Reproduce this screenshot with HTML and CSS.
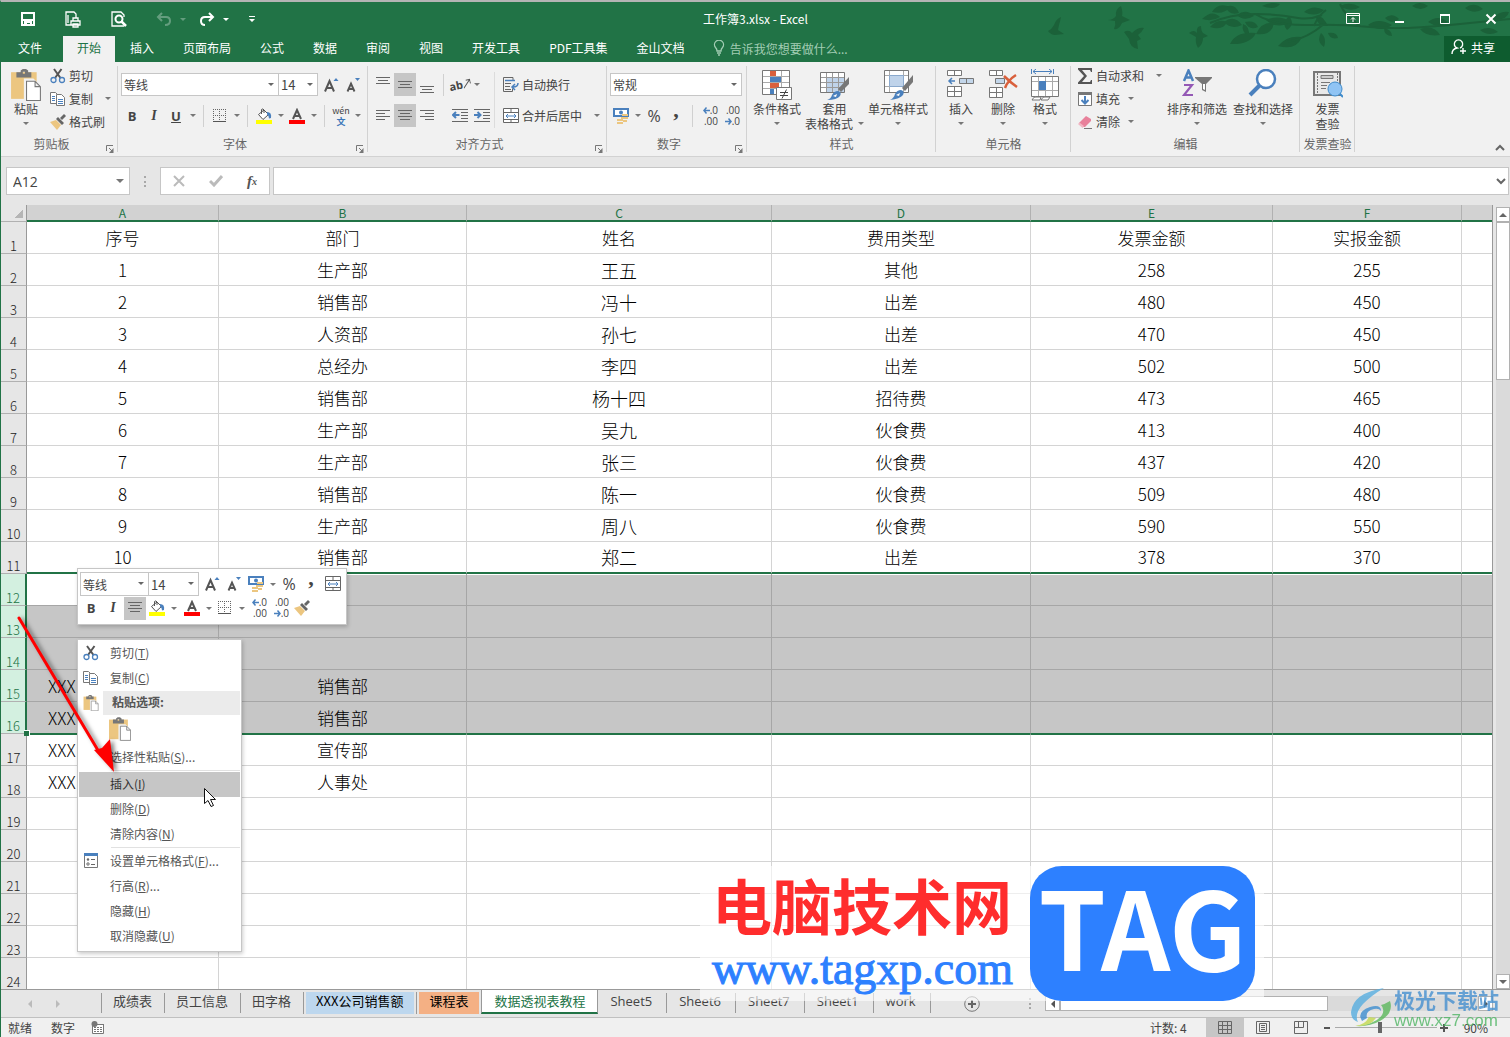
FILE: index.html
```html
<!DOCTYPE html>
<html lang="zh-CN">
<head>
    <meta charset="UTF-8">
    <meta name="viewport" content="width=device-width, initial-scale=1.0">
    <title>工作簿3.xlsx - Excel</title>
    <link rel="stylesheet" href="styles.css">
</head>
<body>
<!-- Icon set -->
<svg class="defs" aria-hidden="true">
    <symbol id="paste" viewBox="0 0 28 30">
        <path fill="#ecc680" d="M0 3h24v25H0z"/>
        <path fill="#777" d="M5 8V3h4V1.500l2-1.500h3l2 1.500V3h3v5zM11 2.500v2h2v-2z" fill-rule="evenodd"/>
        <path fill="#f1f1f1" d="M12 9h9l7 7v14H12z"/>
        <path fill="#fff" stroke="#777" d="M14.500 11.500h8l5 5v13h-13zM22.500 11.500v5h5"/>
    </symbol>
    <symbol id="cut" viewBox="0 0 16 16">
        <path stroke="#555" stroke-width="2" fill="none" d="M4 1l6.500 9M11.500 1L5 10"/>
        <circle cx="3.500" cy="12" r="2.500" fill="none" stroke="#4a80bd" stroke-width="1.300"/>
        <circle cx="12" cy="12" r="2.500" fill="none" stroke="#4a80bd" stroke-width="1.300"/>
    </symbol>
    <symbol id="copy" viewBox="0 0 16 16">
        <path fill="#fff" stroke="#777" d="M.5 1.500h5l3 3v8h-8z"/>
        <path stroke="#4a80bd" d="M2 5.500h3M2 7.500h3M2 9.500h3"/>
        <path fill="#fff" stroke="#777" d="M6.500 3.500h5l3 3v8h-8z"/>
        <path stroke="#4a80bd" d="M8 8.500h5M8 10.500h5M8 12.500h5"/>
    </symbol>
    <symbol id="brush" viewBox="0 0 16 16">
        <path fill="#ecc680" d="M0 8l6-2 5 5-4 5z"/>
        <path fill="#666" d="M6 5l2-2 6 6-2 2zM10 4l4-4 2 2-4 4z"/>
    </symbol>
    <symbol id="grow" viewBox="0 0 16 16">
        <path fill="none" stroke="#555" stroke-width="2" d="M2 14.500L6.500 4l4.500 10.500M3.500 11h6"/>
        <path fill="#4a80bd" d="M10.500 4L13 1l2.500 3z"/>
    </symbol>
    <symbol id="shrink" viewBox="0 0 16 16">
        <path fill="none" stroke="#555" stroke-width="1.900" d="M2.500 14.500L6 6.500l3.500 8M3.500 12h5"/>
        <path fill="#4a80bd" d="M10 1h5l-2.500 3z"/>
    </symbol>
    <symbol id="borders" viewBox="0 0 16 16">
        <path stroke="#666" stroke-dasharray="1 1" fill="none" d="M1 1.500h13M1 7.500h13M1.500 1v13M7.500 1v13M13.500 1v13"/>
        <path stroke="#555" d="M1 13.500h13"/>
    </symbol>
    <symbol id="bucket" viewBox="0 0 16 16">
        <path fill="#fff" stroke="#555" d="M2.500 6.500L8 2l4.500 4.500L7 11.500z"/>
        <path fill="none" stroke="#555" d="M5.500 6V1.500q1.500-1.500 2.500.5v3"/>
        <path fill="#4a80bd" d="M11 4q5 0 4 6l-2 .5q0-3-2-4z"/>
        <path fill="#ff0" d="M0 12h16v4H0z"/>
    </symbol>
    <symbol id="color" viewBox="0 0 16 16">
        <path fill="none" stroke="#555" stroke-width="2" d="M4 11L8 2l4 9M5.500 8h5"/>
        <path fill="#f00" d="M0 12h16v4H0z"/>
    </symbol>
    <symbol id="a-top" viewBox="0 0 16 16"><path stroke="#666" d="M1 .5h14M3 3.500h10M1 6.500h14"/></symbol>
    <symbol id="a-mid" viewBox="0 0 16 16"><path stroke="#666" d="M1 4.500h14M3 7.500h10M1 10.500h14"/></symbol>
    <symbol id="a-bot" viewBox="0 0 16 16"><path stroke="#666" d="M1 9.500h14M3 12.500h10M1 15.500h14"/></symbol>
    <symbol id="a-left" viewBox="0 0 16 16"><path stroke="#666" d="M1 2.500h14M1 5.500h9M1 8.500h14M1 11.500h9"/></symbol>
    <symbol id="a-center" viewBox="0 0 16 16"><path stroke="#666" d="M1 2.500h14M3 5.500h10M1 8.500h14M3 11.500h10"/></symbol>
    <symbol id="a-right" viewBox="0 0 16 16"><path stroke="#666" d="M1 2.500h14M6 5.500h9M1 8.500h14M6 11.500h9"/></symbol>
    <symbol id="outdent" viewBox="0 0 16 16">
        <path stroke="#666" d="M0 1.500h16M9 4.500h7M9 7.500h7M9 10.500h7M0 13.500h16"/>
        <path stroke="#4a80bd" stroke-width="2" fill="none" d="M7.500 7H1.500M4 4L1 7l3 3"/>
    </symbol>
    <symbol id="indent" viewBox="0 0 16 16">
        <path stroke="#666" d="M0 1.500h16M9 4.500h7M9 7.500h7M9 10.500h7M0 13.500h16"/>
        <path stroke="#4a80bd" stroke-width="2" fill="none" d="M0 7h6M3.500 4l3 3-3 3"/>
    </symbol>
    <symbol id="wrap" viewBox="0 0 16 16">
        <path fill="none" stroke="#666" d="M10 3.500V.5H.5v14h9v-3M2 6.500h6M2 9.500h5M2 12.500h6"/>
        <path fill="none" stroke="#4a80bd" stroke-width="1.500" d="M2 3.500h10M15 6q0 4-5 4M12 7l-3 3 3 3"/>
    </symbol>
    <symbol id="merge" viewBox="0 0 16 16">
        <path fill="#fff" stroke="#666" d="M.5.5h15v14H.5zM.5 4.500h15M.5 11.500h15M8 .5v4M8 11.500v3"/>
        <path fill="none" stroke="#4a80bd" d="M3 8h10M5 6L3 8l2 2M11 6l2 2-2 2"/>
    </symbol>
    <symbol id="money" viewBox="0 0 16 16">
        <path fill="#fff" stroke="#4a80bd" stroke-width="2" d="M1 1h14v7H1z"/>
        <circle cx="8" cy="4.500" r="2" fill="#4a80bd"/>
        <path fill="#ecc680" d="M9 6h6v2H9zM8 9h7v2H8zM4 11h6v2H4zM4 14h6v2H4zM10 12h4v2h-4z"/>
    </symbol>
    <symbol id="larr" viewBox="0 0 6 6"><path fill="none" stroke="#4a80bd" stroke-width="1.300" d="M6 3H1M3 .5L.8 3 3 5.500"/></symbol>
    <symbol id="rarr" viewBox="0 0 6 6"><path fill="none" stroke="#4a80bd" stroke-width="1.300" d="M0 3h5M3 .5L5.200 3 3 5.500"/></symbol>
    <symbol id="cond" viewBox="0 0 30 32">
        <path fill="#fff" stroke="#777" d="M.5 1.500h27v24H.5z"/>
        <path stroke="#aaa" d="M8.500 2v23M19.500 2v23M1 7.500h26M1 13.500h26M1 19.500h26"/>
        <path fill="#d9603c" d="M8 2h6v5H8zM8 14h9v5H8z"/>
        <path fill="#4a80bd" d="M8 8h11v5H8zM8 20h4v5H8z"/>
        <path fill="#fff" stroke="#777" d="M14.500 18.500h15v12h-15z"/>
        <path stroke="#444" d="M18 23.500h8M18 26.500h8M24.500 20.500l-4.500 9"/>
    </symbol>
    <symbol id="tblfmt" viewBox="0 0 30 32">
        <path fill="#fff" stroke="#777" d="M.5 3.500h24v20H.5z"/>
        <path fill="#bfd3ea" d="M7 9h17v14H7z"/>
        <path stroke="#999" d="M6.500 4v19M12.500 4v19M18.500 4v19M1 8.500h23M1 13.500h23M1 18.500h23"/>
        <path fill="#777" d="M29 8v7l-8 8-3-3z"/>
        <path fill="#4a80bd" d="M18 22q4 1 2 5-3 4-13 4 4-1 5-5 2-4 6-4z"/><path fill="#fff" d="M13 27l4-2-1 3z"/>
    </symbol>
    <symbol id="cellstyle" viewBox="0 0 30 32">
        <path fill="#fff" stroke="#777" d="M1.500 1.500h24v22h-24z"/>
        <path stroke="#aaa" d="M6.500 2v21M20.500 2v21M2 6.500h23M2 17.500h23"/>
        <path fill="#bfd3ea" stroke="#8aa9cd" d="M6.500 6.500h14v11h-14z"/>
        <path fill="#777" d="M30 6v7l-8 9-3-3z"/>
        <path fill="#4a80bd" d="M18 21q4 1 2 5-3 4-13 5 4-2 5-6 2-4 6-4z"/><path fill="#fff" d="M13 26l4-2-1 3z"/>
    </symbol>
    <symbol id="ins" viewBox="0 0 28 32">
        <path fill="#fff" stroke="#777" d="M.5 1.500h14v5H.5zM7.500 1.500v5M.5 17.500h14v10H.5zM7.500 17.500v10M.5 22.500h14"/>
        <path fill="#c3d6ea" stroke="#777" d="M12.500 9.500h14v5h-14zM19.500 9.500v5"/>
        <path stroke="#4a80bd" stroke-width="1.500" fill="none" d="M8 12H2M5 9l-3 3 3 3"/>
    </symbol>
    <symbol id="del" viewBox="0 0 28 32">
        <path fill="#fff" stroke="#777" d="M.5 1.500h13v5H.5zM7.500 1.500v5M.5 18.500h13v10H.5zM7.500 18.500v10M.5 23.500h13"/>
        <path fill="#c3d6ea" stroke="#777" d="M6.500 9.500h9v5h-9z"/>
        <path stroke="#d9603c" stroke-width="2.500" fill="none" d="M15 7q7 7 13 11M27 6q-8 5-11 13"/>
    </symbol>
    <symbol id="fmt" viewBox="0 0 28 32">
        <path stroke="#4a80bd" fill="none" d="M.5 0v5M22.500 0v5M2 2.500h19M5 0L2 2.500 5 5M18 0l3 2.500L18 5"/>
        <path fill="#fff" stroke="#777" d="M.5 7.500h27v20H.5z"/>
        <path stroke="#aaa" d="M7.500 8v19M14.500 8v19M21.500 8v19M1 12.500h26M1 21.500h26"/>
        <path fill="#4a80bd" d="M8 12h7v9H8z"/>
        <path fill="#fff" stroke="#777" d="M1 31q2-4 4-3h5l-1 3zM10 31q2-4 4-3h5l-2 3z"/>
    </symbol>
    <symbol id="sum" viewBox="0 0 16 16"><path fill="#555" d="M1 0h14v4h-1l-1-2H5l5 6-5 6h8l1-2h1v4H1v-1.500L7 8 1 1.500z"/></symbol>
    <symbol id="fill" viewBox="0 0 16 16">
        <path fill="#fff" stroke="#777" d="M1.500 1.500h13v13h-13z"/><path fill="#777" d="M1 1h14v3H1z"/>
        <path stroke="#4a80bd" stroke-width="2" fill="none" d="M8 5v7M4.500 9L8 12.500 11.500 9"/>
    </symbol>
    <symbol id="eraser" viewBox="0 0 16 16">
        <path fill="#e8819b" d="M9 2l5 3v2l-6 6H6L2 9z"/><path fill="#f1b5c2" d="M1 10l1.500-1.500L7 12l-1.500 2z"/><path stroke="#777" d="M7 14.500h8"/>
    </symbol>
    <symbol id="sort" viewBox="0 0 30 32">
        <path stroke="#4a80bd" stroke-width="2.500" fill="none" d="M2 12L6.500 1.500 11 12M3.500 8.500h6"/>
        <path stroke="#9459b5" stroke-width="2.200" fill="none" d="M2 16h8L2 26h9"/>
        <path fill="#777" d="M13 8h17v1l-6 6v8l-4-2v-6l-7-6z"/><path fill="#fff" d="M21 15h2v6l-2-1z"/>
    </symbol>
    <symbol id="find" viewBox="0 0 30 32">
        <path stroke="#4a80bd" stroke-width="4" d="M2 26l11-11"/>
        <circle cx="18" cy="10" r="9" fill="#fff" stroke="#4a80bd" stroke-width="2.500"/>
    </symbol>
    <symbol id="invoice" viewBox="0 0 30 32">
        <path fill="#e9e9e9" stroke="#777" stroke-width="2" d="M1 3h26v23H1z"/>
        <path stroke="#777" stroke-dasharray="2 1" d="M4.500 4v21M24.500 4v21"/>
        <path fill="#ccc" stroke="#777" d="M8 6.500h12v3H8zM8 13.500h9M8 16.500h6M8 19.500h5"/>
        <path stroke="#3f8ccc" stroke-width="2" d="M26 24l4 4"/>
        <circle cx="22" cy="20" r="7" fill="#90c4f4" stroke="#3f8ccc"/>
    </symbol>
    <symbol id="launch" viewBox="0 0 8 8"><path fill="none" stroke="#777" d="M.5 6V.5H7M3 3l3 3"/><path fill="#777" d="M7.500 3v5H3z"/></symbol>
    <symbol id="swirl" viewBox="0 0 44 42">
        <path fill="#58aee0" d="M34 1Q3 6 1 25q0 8 7 10-4-8 5-18Q22 8 34 1z"/>
        <path fill="#3e8ed0" d="M12 34q-6-9 8-14 11-3 11 4-2-3-7-2-9 2-7 9z"/>
        <path fill="#5cb85c" d="M40 14q4 12-10 20Q19 40 6 39q20-2 26-11 3-6-1-10 4-1 9-4z"/>
        <path fill="#c3d94e" d="M5 39q10-1 14-9l7 1q-6 9-21 8z"/>
    </symbol>
</svg>

<div class="app">
    <header class="top">
        <!-- Leaf and bird decoration behind the window buttons -->
        <svg class="foliage" viewBox="0 0 470 60" width="470" height="60" aria-hidden="true">
            <g fill="#1b6139">
                <path d="M8 29q4-2 6-6 2-6 7-8-1 5-2 8l-1 5 6 4-9 1q-4 0-7-4z"/>
                <path d="M68 18q5 0 8-4-1-7 5-10 2 6 1 10l8 4-8 3q-3 7-8 6 2-4 1-8z"/>
                <path d="M84 30q5-3 8 1 6-6 12-5-2 4-6 7l3 4-4 2 1 8q-8-1-9-10z"/>
                <path d="M149 31q5-4 8 0-1-7 4-7 0 5 2 7l5 3-5 2q0 6-5 10-3-5-2-11z"/>
                <path d="M162 17q10-10 18-2-8 5-18 2zM172 10q6-10 18-5-6 8-18 5zM170 25q8-9 17-5-4 9-17 5zM184 20q10-8 18 3-11 5-18-3zM186 5q9-4 13 6-10 3-13-6zM197 13q9-7 17 1-10 6-17-1zM203 22q7 2 6 13-8-5-6-13zM205 20q10-2 13 5-9 4-13-5z"/>
                <path d="M190 42q6-13 26-11-6 12-26 11zM216 32q6-13 18-11-2 13-18 11zM222 4q8-5 18-2-5 7-18 2zM226 18q13-6 26 2-16 8-26-2zM238 44q9-11 24-9-6 14-24 9zM247 28q-6-6 2-14 7 8-2 14zM264 10q9-8 20-2-8 8-20 2zM276 14q6-2 12 10-12 0-12-10zM281 31q6 5 3 14-8-5-3-14zM288 31q9-1 10 5-8 2-10-5z"/>
                <path d="M300 4q10-5 20 1-9 6-20-1zM328 23q10-8 24 0-10 8-24 0zM345 16q7-6 14 1-7 6-14-1zM372 4q8-6 16 0-7 6-16 0zM388 20q10-8 20 0-10 7-20 0zM344 26q8 2 8 8-8 0-8-8zM380 27q14-5 20 6-14 2-20-6zM425 6q9-7 18 1-9 6-18-1zM452 17q8-9 17-7-2 9-17 7zM440 28q10-5 18 2-10 5-18-2z"/>
            </g>
            <path fill="none" stroke="#1b6139" stroke-width="2" d="M170 21q20-9 46-9 20 0 42 4 12 2 24-3M215 12q20 12 55 11 30-1 60 2t80-2 60-6M274 24q4-10 12-16M300 2q5 12 20 22M248 40q20-4 36-18"/>
        </svg>
        <div class="titlebar">
            <div class="qat">
                <button aria-label="保存"><svg width="16" height="16"><path fill="none" stroke="#fff" stroke-width="2" d="M2 2h12v12H2zM3 9h10"/><path fill="#fff" d="M4 9h8v5h-2v-2H7v2H4z"/></svg></button>
                <button aria-label="快速打印"><svg width="18" height="18"><path fill="none" stroke="#fff" stroke-width="1.300" d="M7 15H2V2h8l2 2v4M4 5v8M7 11h9v4H7zM9 11V8h5v3M9 14h5v3H9z"/></svg></button>
                <button aria-label="打印预览"><svg width="18" height="18"><path fill="none" stroke="#fff" stroke-width="1.300" d="M14 7V5l-3-3H2v14h12"/><circle cx="9" cy="9" r="3.500" fill="none" stroke="#fff" stroke-width="2"/><path stroke="#fff" stroke-width="2.500" d="M11 11l5 5"/></svg></button>
                <button class="faded" aria-label="撤消"><svg width="16" height="16"><path fill="none" stroke="#fff" stroke-width="2" d="M2 6h8q4 0 4 4t-5 4M6 2L2 6l4 4"/></svg><i class="caret"></i></button>
                <button aria-label="恢复"><svg width="16" height="16"><path fill="none" stroke="#fff" stroke-width="2" d="M14 6H6q-4 0-4 4t4 4M10 2l4 4-4 4"/></svg><i class="caret"></i></button>
                <button aria-label="自定义快速访问工具栏"><svg width="8" height="8"><path fill="#fff" d="M1 1h6v1H1zM1 4h6L4 7z"/></svg></button>
            </div>
            <div class="doc-title">工作簿3.xlsx - Excel</div>
            <div class="window-buttons">
                <button aria-label="功能区显示选项"><svg width="14" height="12"><path fill="none" stroke="#fff" d="M.5.5h13v10H.5zM1 2.500h12M7 9V5M5 6.500l2-2 2 2"/></svg></button>
                <button aria-label="最小化"><svg width="14" height="12"><path fill="#fff" d="M3 8h9v2H3z"/></svg></button>
                <button aria-label="最大化"><svg width="12" height="12"><path fill="none" stroke="#fff" d="M1.500 1.500h9v9h-9z"/><path fill="#fff" d="M1 1h10v2H1z"/></svg></button>
                <button aria-label="关闭"><svg width="12" height="12"><path stroke="#fff" stroke-width="2" d="M1.500 1.500l9 9M10.500 1.500l-9 9"/></svg></button>
            </div>
        </div>
        <nav class="ribbon-tabs">
            <button class="file">文件</button>
            <button class="active">开始</button>
            <button>插入</button>
            <button>页面布局</button>
            <button>公式</button>
            <button>数据</button>
            <button>审阅</button>
            <button>视图</button>
            <button>开发工具</button>
            <button>PDF工具集</button>
            <button>金山文档</button>
            <label class="tell-me">
                <svg width="12" height="16"><path fill="none" stroke="#a3cdb4" stroke-width="1.300" d="M4 11q0-2-1.500-3.500a4.500 4.500 0 1 1 7 0Q8 9 8 11zM4 13h4M5 15h2"/></svg>
                <input type="text" placeholder="告诉我您想要做什么..." aria-label="告诉我您想要做什么">
            </label>
            <button class="share">
                <svg width="16" height="18"><path fill="none" stroke="#fff" stroke-width="1.400" d="M1 16q0-5 5-6a4.200 4.200 0 1 1 3 0M9 13h6M12 10v6"/></svg>共享
            </button>
        </nav>
    </header>

    <section class="ribbon">
        <div class="group clipboard">
            <div class="tools">
                <button class="big"><svg><use href="#paste"/></svg><span>粘贴</span><span><i class="caret"></i></span></button>
                <div class="stack">
                    <button><svg><use href="#cut"/></svg>剪切</button>
                    <button><svg><use href="#copy"/></svg>复制<i class="caret far"></i></button>
                    <button><svg><use href="#brush"/></svg>格式刷</button>
                </div>
            </div>
            <div class="name">剪贴板<button class="launcher" aria-label="剪贴板设置"><svg><use href="#launch"/></svg></button></div>
        </div>
        <div class="group font">
            <div class="tools rows">
                <div class="row">
                    <span class="combo grow"><select aria-label="字体"><option>等线</option></select></span>
                    <span class="combo size"><select aria-label="字号"><option>14</option></select></span>
                    <button class="btn first" aria-label="增大字号"><svg><use href="#grow"/></svg></button>
                    <button class="btn" aria-label="减小字号"><svg><use href="#shrink"/></svg></button>
                </div>
                <div class="row">
                    <button class="btn b">B</button>
                    <button class="btn it">I</button>
                    <button class="btn un">U</button>
                    <button class="drop" aria-label="下划线选项"><i class="caret"></i></button>
                    <i class="sep"></i>
                    <button class="btn" aria-label="边框"><svg><use href="#borders"/></svg></button>
                    <button class="drop" aria-label="边框选项"><i class="caret"></i></button>
                    <i class="sep"></i>
                    <button class="btn" aria-label="填充颜色"><svg><use href="#bucket"/></svg></button>
                    <button class="drop" aria-label="填充颜色选项"><i class="caret"></i></button>
                    <button class="btn" aria-label="字体颜色"><svg><use href="#color"/></svg></button>
                    <button class="drop" aria-label="字体颜色选项"><i class="caret"></i></button>
                    <i class="sep"></i>
                    <button class="btn pinyin"><span>wén</span><span>文</span></button>
                    <button class="drop" aria-label="拼音选项"><i class="caret"></i></button>
                </div>
            </div>
            <div class="name">字体<button class="launcher" aria-label="字体设置"><svg><use href="#launch"/></svg></button></div>
        </div>
        <div class="group align">
            <div class="tools">
                <div class="rows">
                    <div class="row">
                        <button class="btn" aria-label="顶端对齐"><svg><use href="#a-top"/></svg></button>
                        <button class="btn on" aria-label="垂直居中"><svg><use href="#a-mid"/></svg></button>
                        <button class="btn" aria-label="底端对齐"><svg><use href="#a-bot"/></svg></button>
                        <i class="sep"></i>
                        <button class="btn orient">ab<svg width="8" height="10"><path fill="none" stroke="#555" d="M0 9l7-7M3.500 1.500H7.500v4"/></svg></button>
                        <button class="drop" aria-label="方向选项"><i class="caret"></i></button>
                    </div>
                    <div class="row">
                        <button class="btn" aria-label="左对齐"><svg><use href="#a-left"/></svg></button>
                        <button class="btn on" aria-label="居中"><svg><use href="#a-center"/></svg></button>
                        <button class="btn" aria-label="右对齐"><svg><use href="#a-right"/></svg></button>
                        <i class="sep clear"></i>
                        <button class="btn" aria-label="减少缩进量"><svg><use href="#outdent"/></svg></button>
                        <button class="btn" aria-label="增加缩进量"><svg><use href="#indent"/></svg></button>
                    </div>
                </div>
                <i class="tall-sep"></i>
                <div class="rows">
                    <button class="wide"><svg><use href="#wrap"/></svg>自动换行</button>
                    <button class="wide"><svg><use href="#merge"/></svg>合并后居中<i class="caret far"></i></button>
                </div>
            </div>
            <div class="name">对齐方式<button class="launcher" aria-label="对齐设置"><svg><use href="#launch"/></svg></button></div>
        </div>
        <div class="group number">
            <div class="tools rows">
                <div class="row">
                    <span class="combo grow"><select aria-label="数字格式"><option>常规</option></select></span>
                </div>
                <div class="row">
                    <button class="btn" aria-label="会计数字格式"><svg><use href="#money"/></svg></button>
                    <button class="drop" aria-label="会计格式选项"><i class="caret"></i></button>
                    <button class="btn pct">%</button>
                    <button class="btn comma">,</button>
                    <i class="sep"></i>
                    <button class="btn dec"><span><svg><use href="#larr"/></svg>.0</span><span>.00</span></button>
                    <button class="btn dec"><span>.00</span><span><svg><use href="#rarr"/></svg>.0</span></button>
                </div>
            </div>
            <div class="name">数字<button class="launcher" aria-label="数字设置"><svg><use href="#launch"/></svg></button></div>
        </div>
        <div class="group styles">
            <div class="tools">
                <button class="big"><svg><use href="#cond"/></svg><span>条件格式</span><span><i class="caret"></i></span></button>
                <button class="big"><svg><use href="#tblfmt"/></svg><span>套用</span><span>表格格式<i class="caret near"></i></span></button>
                <button class="big"><svg><use href="#cellstyle"/></svg><span>单元格样式</span><span><i class="caret"></i></span></button>
            </div>
            <div class="name plain">样式</div>
        </div>
        <div class="group cells">
            <div class="tools">
                <button class="big"><svg><use href="#ins"/></svg><span>插入</span><span><i class="caret"></i></span></button>
                <button class="big"><svg><use href="#del"/></svg><span>删除</span><span><i class="caret"></i></span></button>
                <button class="big"><svg><use href="#fmt"/></svg><span>格式</span><span><i class="caret"></i></span></button>
            </div>
            <div class="name plain">单元格</div>
        </div>
        <div class="group editing">
            <div class="tools">
                <div class="stack">
                    <button><svg><use href="#sum"/></svg>自动求和<i class="caret far"></i></button>
                    <button><svg><use href="#fill"/></svg>填充<i class="caret near"></i></button>
                    <button><svg><use href="#eraser"/></svg>清除<i class="caret near"></i></button>
                </div>
                <button class="big"><svg><use href="#sort"/></svg><span>排序和筛选</span><span><i class="caret"></i></span></button>
                <button class="big"><svg><use href="#find"/></svg><span>查找和选择</span><span><i class="caret"></i></span></button>
            </div>
            <div class="name plain">编辑</div>
        </div>
        <div class="group invoice">
            <div class="tools">
                <button class="big"><svg><use href="#invoice"/></svg><span>发票</span><span>查验</span></button>
            </div>
            <div class="name plain">发票查验</div>
        </div>
        <button class="collapse" aria-label="折叠功能区"><svg width="10" height="8"><path fill="none" stroke="#666" stroke-width="2" d="M1 6l4-4 4 4"/></svg></button>
    </section>

    <section class="formula-bar">
        <div class="name-box"><input type="text" value="A12" aria-label="名称框"><i class="caret big-caret"></i></div>
        <i class="dots"></i>
        <div class="fx-buttons">
            <button aria-label="取消"><svg width="12" height="12"><path stroke="#bbb" stroke-width="2" d="M1 1l10 10M11 1L1 11"/></svg></button>
            <button aria-label="输入"><svg width="14" height="12"><path fill="none" stroke="#bbb" stroke-width="3" d="M1 6l4 4 8-9"/></svg></button>
            <button class="fx" aria-label="插入函数">f<sub>x</sub></button>
        </div>
        <div class="formula"><input type="text" aria-label="编辑栏"><svg width="10" height="8"><path fill="none" stroke="#666" stroke-width="2" d="M1 2l4 4 4-4"/></svg></div>
    </section>

    <main class="workspace">
        <div class="sheet">
            <table>
                <colgroup><col class="c-row"><col class="c-a"><col class="c-b"><col class="c-c"><col class="c-d"><col class="c-e"><col class="c-f"><col></colgroup>
                <thead>
                    <tr><th class="corner"></th><th>A</th><th>B</th><th>C</th><th>D</th><th>E</th><th>F</th><th></th></tr>
                </thead>
                <tbody>
                    <tr><th>1</th><td>序号</td><td>部门</td><td class="plain">姓名</td><td>费用类型</td><td>发票金额</td><td>实报金额</td><td></td></tr>
                    <tr><th>2</th><td>1</td><td>生产部</td><td>王五</td><td>其他</td><td>258</td><td>255</td><td></td></tr>
                    <tr><th>3</th><td>2</td><td>销售部</td><td>冯十</td><td>出差</td><td>480</td><td>450</td><td></td></tr>
                    <tr><th>4</th><td>3</td><td>人资部</td><td>孙七</td><td>出差</td><td>470</td><td>450</td><td></td></tr>
                    <tr><th>5</th><td>4</td><td>总经办</td><td>李四</td><td>出差</td><td>502</td><td>500</td><td></td></tr>
                    <tr><th>6</th><td>5</td><td>销售部</td><td>杨十四</td><td>招待费</td><td>473</td><td>465</td><td></td></tr>
                    <tr><th>7</th><td>6</td><td>生产部</td><td>吴九</td><td>伙食费</td><td>413</td><td>400</td><td></td></tr>
                    <tr><th>8</th><td>7</td><td>生产部</td><td>张三</td><td>伙食费</td><td>437</td><td>420</td><td></td></tr>
                    <tr><th>9</th><td>8</td><td>销售部</td><td>陈一</td><td>伙食费</td><td>509</td><td>480</td><td></td></tr>
                    <tr><th>10</th><td>9</td><td>生产部</td><td>周八</td><td>伙食费</td><td>590</td><td>550</td><td></td></tr>
                    <tr class="before"><th>11</th><td>10</td><td>销售部</td><td>郑二</td><td>出差</td><td>378</td><td>370</td><td></td></tr>
                    <tr class="sel sel-top"><th>12</th><td class="current"></td><td></td><td></td><td></td><td></td><td></td><td></td></tr>
                    <tr class="sel"><th>13</th><td></td><td></td><td></td><td></td><td></td><td></td><td></td></tr>
                    <tr class="sel"><th>14</th><td></td><td></td><td></td><td></td><td></td><td></td><td></td></tr>
                    <tr class="sel"><th>15</th><td class="left">XXX</td><td>销售部</td><td></td><td></td><td></td><td></td><td></td></tr>
                    <tr class="sel sel-end"><th>16<i class="handle"></i></th><td class="left">XXX</td><td>销售部</td><td></td><td></td><td></td><td></td><td></td></tr>
                    <tr class="after"><th>17</th><td class="left">XXX</td><td>宣传部</td><td></td><td></td><td></td><td></td><td></td></tr>
                    <tr><th>18</th><td class="left">XXX</td><td>人事处</td><td></td><td></td><td></td><td></td><td></td></tr>
                    <tr><th>19</th><td></td><td></td><td></td><td></td><td></td><td></td><td></td></tr>
                    <tr><th>20</th><td></td><td></td><td></td><td></td><td></td><td></td><td></td></tr>
                    <tr><th>21</th><td></td><td></td><td></td><td></td><td></td><td></td><td></td></tr>
                    <tr><th>22</th><td></td><td></td><td></td><td></td><td></td><td></td><td></td></tr>
                    <tr><th>23</th><td></td><td></td><td></td><td></td><td></td><td></td><td></td></tr>
                    <tr><th>24</th><td></td><td></td><td></td><td></td><td></td><td></td><td></td></tr>
                </tbody>
            </table>
        </div>
        <div class="vscroll">
            <button aria-label="向上滚动"><i class="tri up"></i></button>
            <div class="vtrack"><div class="vthumb"></div></div>
            <button aria-label="向下滚动"><i class="tri down"></i></button>
        </div>
    </main>

    <footer>
        <div class="sheet-bar">
            <div class="sheet-nav"><i class="tri left pale"></i><i class="tri right pale"></i></div>
            <div class="sheet-tabs">
                <button>成绩表</button>
                <button>员工信息</button>
                <button>田字格</button>
                <button class="filled"><span class="blue">XXX公司销售额</span></button>
                <button class="filled"><span class="orange">课程表</span></button>
                <button class="active">数据透视表教程</button>
                <button class="latin">Sheet5</button>
                <button class="latin">Sheet6</button>
                <button class="latin">Sheet7</button>
                <button class="latin">Sheet1</button>
                <button class="latin">work</button>
            </div>
            <button class="add" aria-label="新工作表"><svg width="16" height="16"><circle cx="8" cy="8" r="7.300" fill="none" stroke="#777"/><path stroke="#666" stroke-width="2" d="M4 8h8M8 4v8"/></svg></button>
            <i class="dots small"></i>
            <div class="hscroll">
                <button aria-label="向左滚动"><i class="tri left"></i></button>
                <div class="htrack"><div class="hthumb"></div></div>
                <button aria-label="向右滚动"><i class="tri right"></i></button>
            </div>
        </div>
        <div class="status">
            <span>就绪</span>
            <span>数字</span>
            <svg class="macro" width="14" height="14"><path fill="#fff" stroke="#777" d="M1.500 3.500h11v9h-11z"/><path stroke="#777" d="M7 3.500h6"/><path stroke="#777" stroke-dasharray="2 1" d="M3 6.500h9M3 8.500h9M3 10.500h9"/><circle cx="3.500" cy="3" r="3" fill="#777"/></svg>
            <span class="count">计数: 4</span>
            <button class="view on" aria-label="普通"><svg width="14" height="14"><path fill="none" stroke="#666" d="M.5.5h13v12H.5zM.5 4.500h13M.5 8.500h13M4.500.5v12M9.500.5v12"/></svg></button>
            <button class="view" aria-label="页面布局视图"><svg width="14" height="14"><path fill="none" stroke="#666" d="M.5.5h13v12H.5zM3.500 2.500h7v8h-7zM5 4.500h4M5 6.500h4M5 8.500h4"/></svg></button>
            <button class="view" aria-label="分页预览"><svg width="14" height="14"><path fill="none" stroke="#666" d="M.5.5h13v12H.5zM4.500.5v6M9.500.5v6M.5 6.500h9"/></svg></button>
            <div class="zoom">
                <button aria-label="缩小"><svg width="8" height="8"><path stroke="#555" stroke-width="2" d="M1 4h6"/></svg></button>
                <input type="range" min="10" max="210" value="98" aria-label="缩放">
                <button aria-label="放大"><svg width="8" height="8"><path stroke="#555" stroke-width="2" d="M0 4h8M4 0v8"/></svg></button>
                <span class="percent">90%</span>
            </div>
        </div>
    </footer>

    <!-- Mini toolbar shown with the context menu -->
    <div class="mini">
        <div class="row">
            <span class="combo face"><select aria-label="字体"><option>等线</option></select></span>
            <span class="combo size"><select aria-label="字号"><option>14</option></select></span>
            <button class="btn first" aria-label="增大字号"><svg><use href="#grow"/></svg></button>
            <button class="btn" aria-label="减小字号"><svg><use href="#shrink"/></svg></button>
            <button class="btn" aria-label="会计数字格式"><svg><use href="#money"/></svg></button>
            <button class="drop" aria-label="会计格式选项"><i class="caret"></i></button>
            <button class="btn pct">%</button>
            <button class="btn comma">,</button>
            <button class="btn" aria-label="合并后居中"><svg><use href="#merge"/></svg></button>
        </div>
        <div class="row">
            <button class="btn b">B</button>
            <button class="btn it">I</button>
            <button class="btn on" aria-label="居中"><svg><use href="#a-center"/></svg></button>
            <button class="btn" aria-label="填充颜色"><svg><use href="#bucket"/></svg></button>
            <button class="drop" aria-label="填充颜色选项"><i class="caret"></i></button>
            <button class="btn first" aria-label="字体颜色"><svg><use href="#color"/></svg></button>
            <button class="drop" aria-label="字体颜色选项"><i class="caret"></i></button>
            <button class="btn" aria-label="边框"><svg><use href="#borders"/></svg></button>
            <button class="drop" aria-label="边框选项"><i class="caret"></i></button>
            <button class="btn dec"><span><svg><use href="#larr"/></svg>.0</span><span>.00</span></button>
            <button class="btn dec"><span>.00</span><span><svg><use href="#rarr"/></svg>.0</span></button>
            <button class="btn" aria-label="格式刷"><svg><use href="#brush"/></svg></button>
        </div>
    </div>

    <!-- Row context menu -->
    <div class="menu">
        <button><svg><use href="#cut"/></svg>剪切(<u>T</u>)</button>
        <button><svg><use href="#copy"/></svg>复制(<u>C</u>)</button>
        <div class="menu-head"><svg><use href="#paste"/></svg><span>粘贴选项:</span></div>
        <button class="paste-option" aria-label="粘贴"><svg><use href="#paste"/></svg></button>
        <button>选择性粘贴(<u>S</u>)...</button>
        <hr>
        <button class="hover">插入(<u>I</u>)</button>
        <button>删除(<u>D</u>)</button>
        <button>清除内容(<u>N</u>)</button>
        <hr>
        <button><svg viewBox="0 0 16 16"><path fill="#fff" stroke="#777" d="M1.500 1.500h13v13h-13z"/><path fill="#4a80bd" d="M1 0h14v3H1z"/><path stroke="#666" d="M8 6.500h4M8 11.500h4"/><circle cx="5" cy="6.500" r="1.200" fill="#666"/><circle cx="5" cy="11" r="1.200" fill="none" stroke="#666"/></svg>设置单元格格式(<u>F</u>)...</button>
        <button>行高(<u>R</u>)...</button>
        <button>隐藏(<u>H</u>)</button>
        <button>取消隐藏(<u>U</u>)</button>
    </div>

    <!-- Red pointer arrow and mouse cursor -->
    <svg class="pointer" width="220" height="210" aria-hidden="true">
        <g class="shadowed">
            <path stroke="#f00" stroke-width="3" stroke-linecap="round" d="M9 8l80 134"/>
            <path fill="#f00" d="M104 162L84 140l8-2 8-9z"/>
        </g>
        <path fill="#fff" stroke="#111" d="M194.500 178.500v15l3.500-3 3 6 2.500-1-3-6h5z"/>
    </svg>

    <div class="stamp">
        <div class="stamp-text"><strong>电脑技术网</strong><span>www.tagxp.com</span></div>
        <div class="tag">TAG</div>
    </div>
    <div class="site">
        <svg width="44" height="42"><use href="#swirl"/></svg>
        <div><strong>极光下载站</strong><span>www.xz7.com</span></div>
    </div>
</div>
</body>
</html>
```

FILE: styles.css
```css
* {
    box-sizing: border-box;
}
body {
    margin: 0;
    font-family: "Noto Sans CJK SC", sans-serif;
    font-size: 12px;
    color: #444;
    background: #e6e6e6;
}
button, input, select {
    font: inherit;
    color: inherit;
    border: 0;
    padding: 0;
    margin: 0;
    background: none;
    outline: none;
    border-radius: 0;
}
button {
    display: flex;
    align-items: center;
    justify-content: center;
    white-space: nowrap;
}
svg {
    flex: none;
}
.defs {
    position: absolute;
    width: 0;
    height: 0;
}
.app {
    position: relative;
    display: flex;
    flex-direction: column;
    height: 100vh;
    border-left: 1px solid #217346;
    border-top: 2px solid #b4b4b4;
    overflow: hidden;
}

/* Carets and separators */
.caret {
    border: 3px solid transparent;
    border-top-color: #777;
    border-bottom: 0;
}
.near {
    margin-left: 5px;
}
.far {
    margin-left: 9px;
}
.big-caret {
    border-width: 4px 4px 0;
}
.sep {
    width: 1px;
    height: 22px;
    margin: 0 5px;
    background: #d0d0d0;
}
.clear {
    background: none;
}
.tall-sep {
    width: 1px;
    height: 56px;
    margin-top: 10px;
    background: #dcdcdc;
}
.tri {
    border: 4px solid transparent;
}
.up { border-bottom-color: #666; border-top: 0; }
.down { border-top-color: #666; border-bottom: 0; }
.left.tri { border-right-color: #555; border-left: 0; }
.right { border-left-color: #555; border-right: 0; }
.left.pale { border-right-color: #bbb; }
.right.pale { border-left-color: #bbb; }

/* Title bar and tabs */
.top {
    position: relative;
    background: #217346;
    color: #fff;
}
.foliage {
    position: absolute;
    top: 0;
    right: 0;
}
.titlebar {
    position: relative;
    display: grid;
    grid-template-columns: 1fr auto 1fr;
    align-items: center;
    height: 34px;
}
.doc-title {
    padding-bottom: 1px;
}
.qat {
    display: flex;
    align-items: center;
    gap: 28px;
    padding-left: 19px;
}
.qat .caret {
    border-top-color: #fff;
    margin-left: 8px;
}
.faded {
    opacity: .3;
}
.qat button:nth-child(5) {
    margin-left: -15px;
}
.qat button:last-child {
    margin-left: -9px;
}
.window-buttons {
    display: flex;
    justify-content: flex-end;
    gap: 32px;
    padding-right: 12px;
}
.window-buttons button {
    width: 14px;
}
.ribbon-tabs {
    position: relative;
    display: flex;
    gap: 1px;
    height: 26px;
}
.ribbon-tabs button {
    padding: 0 14px 4px;
}
.ribbon-tabs .file {
    width: 58px;
    margin-right: 3px;
}
.ribbon-tabs .active {
    background: #f1f1f1;
    color: #217346;
}
.tell-me {
    display: flex;
    align-items: center;
    gap: 5px;
    margin-left: 13px;
    padding-bottom: 2px;
}
.tell-me input {
    width: 160px;
}
.tell-me input::placeholder {
    color: #a3cdb4;
}
.ribbon-tabs .share {
    width: 66px;
    margin-left: auto;
    padding: 0 8px 4px 0;
    gap: 4px;
    background: #0e5c2f;
}

/* Ribbon */
.ribbon {
    position: relative;
    display: flex;
    height: 95px;
    background: #f1f1f1;
    border-bottom: 1px solid #d2d2d2;
}
.group {
    position: relative;
    display: flex;
    flex-direction: column;
    flex: none;
}
.group::after {
    content: "";
    position: absolute;
    right: 0;
    top: 4px;
    bottom: 4px;
    width: 1px;
    background: #d2d2d2;
}
.clipboard { width: 117px; }
.font { width: 250px; }
.align { width: 239px; }
.number { width: 140px; }
.styles { width: 189px; }
.cells { width: 135px; }
.editing { width: 229px; }
.invoice { width: 55px; }
.tools {
    display: flex;
    flex: 1;
    padding: 0 3px;
}
.name {
    display: flex;
    justify-content: center;
    height: 22px;
    line-height: 20px;
    padding-right: 16px;
    color: #666;
}
.name.plain {
    padding-right: 0;
}
.launcher {
    position: absolute;
    right: 4px;
    bottom: 3px;
}
.launcher svg {
    width: 8px;
    height: 8px;
}
.big {
    flex-direction: column;
    justify-content: flex-start;
    padding: 7px 3px 0;
    line-height: 15px;
}
.big svg {
    width: 30px;
    height: 32px;
}
.big span {
    display: flex;
    align-items: center;
    justify-content: center;
    height: 15px;
}
.clipboard .big {
    width: 44px;
}
.cells .big {
    width: 42px;
}
.cells .tools, .editing .tools, .styles .tools {
    padding: 0 4px;
}
.invoice .tools {
    justify-content: center;
}
.styles .big {
    padding: 7px 2px 0;
}
.stack {
    padding-top: 2px;
}
.stack button {
    height: 23px;
    gap: 3px;
}
.stack svg {
    width: 16px;
    height: 16px;
}
.clipboard .stack {
    padding-left: 2px;
}
.editing .stack {
    width: 90px;
    padding-left: 2px;
}
.rows {
    display: flex;
    flex-direction: column;
    gap: 8px;
    padding-top: 11px;
}
.row {
    display: flex;
    align-items: center;
    height: 23px;
}
.btn {
    width: 22px;
    height: 23px;
}
.btn svg {
    width: 16px;
    height: 16px;
}
.first {
    margin-left: 2px;
}
.drop {
    width: 11px;
    height: 23px;
}
.on {
    background: #c6c6c6;
}
.b {
    font: bold 13px "Open Sans", sans-serif;
}
.it {
    font: italic bold 14px "Liberation Serif", serif;
}
.un {
    font: bold 13px "Open Sans", sans-serif;
    text-decoration: underline;
}
.pct {
    font: 16px "Open Sans", sans-serif;
}
.comma {
    font: bold 22px "Liberation Serif", serif;
    padding-bottom: 12px;
}
.pinyin {
    flex-direction: column;
    font-size: 9px;
    line-height: 11px;
}
.pinyin span:last-child {
    color: #3b76b8;
    font-weight: bold;
}
.dec {
    flex-direction: column;
    align-items: flex-end;
    padding-right: 2px;
    font: 10px/11px "Open Sans", sans-serif;
}
.dec span {
    display: flex;
    align-items: center;
}
.dec svg {
    width: 7px;
    height: 7px;
}
.btn.orient {
    font: bold 11px "Open Sans", sans-serif;
    transform: rotate(-12deg);
}
.orient svg {
    width: 8px;
    height: 10px;
}
.combo {
    position: relative;
    display: flex;
    height: 23px;
    background: #fff;
    border: 1px solid #c6c6c6;
}
.combo::after {
    content: "";
    position: absolute;
    right: 4px;
    top: 9px;
    border: 3px solid transparent;
    border-top-color: #666;
    border-bottom: 0;
}
.combo select {
    appearance: none;
    width: 100%;
    padding-left: 2px;
}
.combo.size {
    width: 40px;
    margin-left: -1px;
    font-size: 13px;
}
.grow {
    flex: 1;
}
.font .grow {
    flex: none;
    width: 158px;
}
.number .rows .grow, .number .row {
    margin-right: 1px;
}
.align .tools {
    padding-left: 4px;
}
.wide {
    height: 23px;
    gap: 3px;
    padding-left: 8px;
    justify-content: flex-start;
}
.wide svg {
    width: 16px;
    height: 16px;
}
.align .tall-sep {
    margin-left: 1px;
}
.collapse {
    margin: auto 5px 4px auto;
}

/* Formula bar */
.formula-bar {
    display: flex;
    align-items: center;
    height: 48px;
    padding: 0 1px 0 5px;
}
.name-box, .fx-buttons, .formula {
    display: flex;
    align-items: center;
    height: 28px;
    background: #fff;
    border: 1px solid #c6c6c6;
}
.name-box {
    width: 124px;
    padding: 0 5px 0 6px;
    font: 14px "Open Sans", sans-serif;
}
.name-box input, .formula input {
    flex: 1;
    min-width: 0;
}
.dots {
    height: 11px;
    margin: 0 14px;
    border-left: 2px dotted #a8a8a8;
}
.fx-buttons {
    width: 110px;
    justify-content: space-around;
}
.fx {
    font: italic bold 15px "Liberation Serif", serif;
    color: #555;
}
.fx sub {
    font-size: 10px;
}
.formula {
    flex: 1;
    margin-left: 3px;
    padding-right: 2px;
}

/* Worksheet */
.workspace {
    display: flex;
    flex: 1;
    min-height: 0;
}
.sheet {
    flex: 1;
    overflow: hidden;
    border-right: 1px solid #999;
    background: #fff;
}
table {
    width: 100%;
    table-layout: fixed;
    border-collapse: separate;
    border-spacing: 0;
}
.c-row { width: 26px; }
.c-a { width: 192px; }
.c-b { width: 248px; }
.c-c { width: 305px; }
.c-d { width: 259px; }
.c-e { width: 242px; }
.c-f { width: 189px; }
th, td {
    padding: 0;
    overflow: hidden;
    white-space: nowrap;
}
thead th {
    height: 17px;
    line-height: 15px;
    font-weight: normal;
    color: #217346;
    background: #d2d2d2;
    border-right: 1px solid #b1b1b1;
    border-bottom: 2px solid #217346;
}
thead .corner {
    background: linear-gradient(135deg, transparent 50%, #b5b5b5 50%) no-repeat right 3px bottom 3px / 9px 9px, #e6e6e6;
    border-bottom: 1px solid #b1b1b1;
    border-right: 1px solid #999;
}
tbody th {
    position: relative;
    height: 32px;
    padding: 0;
    vertical-align: bottom;
    font-size: 13px;
    font-weight: 300;
    line-height: 14px;
    color: #222;
    background: #e6e6e6;
    border-right: 1px solid #999;
    border-bottom: 1px solid #b1b1b1;
}
td {
    height: 32px;
    font-size: 17px;
    font-weight: 300;
    line-height: 24px;
    text-align: center;
    color: #000;
    border-right: 1px solid #d4d4d4;
    border-bottom: 1px solid #d4d4d4;
}
td:nth-child(4) {
    font-size: 18px;
}
td.plain {
    font-size: 17px;
}
td:last-child, thead th:last-child {
    border-right: 0;
}
td.left {
    text-align: left;
    padding-left: 21px;
}
.before td {
    border-bottom: 2px solid #217346;
}
.sel th {
    background: #d3f0e0;
    color: #217346;
    border-right: 2px solid #217346;
    overflow: visible;
}
.sel td {
    background: #c6c6c6;
    border-color: #a6a6a6;
}
.sel-top td {
    box-shadow: inset 0 1px #fff;
}
.sel .current {
    background: #fff;
}
.sel-end td {
    border-bottom-color: #217346;
}
.after td {
    border-top: 1px solid #217346;
}
.handle {
    position: absolute;
    right: -5px;
    bottom: -3px;
    z-index: 1;
    width: 6px;
    height: 6px;
    background: #217346;
    border: 1px solid #fff;
    border-width: 1px 1px 0 0;
}
.vscroll {
    display: flex;
    flex-direction: column;
    width: 14px;
    margin: 2px 0 0 3px;
}
.vscroll button {
    height: 15px;
    background: #fff;
    border: 1px solid #b1b1b1;
}
.vtrack {
    flex: 1;
    background: #dadada;
}
.vthumb {
    height: 158px;
    background: #fff;
    border: 1px solid #b1b1b1;
}

/* Sheet tabs */
.sheet-bar {
    display: flex;
    align-items: center;
    height: 29px;
    border-top: 1px solid #999;
    border-bottom: 1px solid #c0c0c0;
}
.sheet-nav {
    display: flex;
    gap: 24px;
    width: 100px;
    padding-left: 27px;
}
.sheet-tabs {
    display: flex;
    align-self: flex-start;
    height: 24px;
    font-size: 13px;
}
.sheet-tabs button {
    height: 20px;
    margin-top: 3px;
    padding: 0 12px 6px 11px;
    border-left: 1px solid #999;
}
.sheet-tabs .filled {
    height: 22px;
    margin-top: 2px;
    padding: 0 2px;
    color: #000;
}
.filled span {
    height: 22px;
    line-height: 17px;
    padding: 0 11px 0 10px;
}
.blue {
    background: #bdd7ee;
}
.orange {
    background: #f4b084;
}
.sheet-tabs .active {
    height: 24px;
    margin: 0;
    padding: 0 12px 1px;
    color: #217346;
    background: #fff;
    border-right: 1px solid #999;
    border-bottom: 2px solid #217346;
}
.sheet-tabs .latin {
    padding: 0 14px 4px 12px;
    font-family: "Open Sans", sans-serif;
    border-left: 0;
    border-right: 1px solid #999;
}
.add {
    margin-left: 33px;
}
.small {
    margin: 0 14px 0 auto;
}
.hscroll {
    display: flex;
    width: 448px;
    height: 15px;
    margin-right: 17px;
}
.hscroll button {
    width: 15px;
    background: #fff;
    border: 1px solid #b1b1b1;
}
.htrack {
    flex: 1;
    background: #dadada;
}
.hthumb {
    width: 64%;
    height: 15px;
    background: #fff;
    border: 1px solid #b1b1b1;
}

/* Status bar */
.status {
    display: flex;
    align-items: center;
    gap: 19px;
    height: 19px;
    padding: 0 22px 0 7px;
    line-height: 18px;
    background: #f0f0f0;
}
.macro {
    margin-left: -3px;
}
.count {
    margin-left: auto;
}
.view {
    width: 38px;
    height: 19px;
}
.view + .view {
    margin-left: -19px;
}
.zoom {
    display: flex;
    align-items: center;
    gap: 2px;
    margin-left: -17px;
}
.zoom button {
    width: 11px;
    height: 19px;
}
.zoom input {
    appearance: none;
    width: 102px;
    height: 11px;
    background: linear-gradient(#aaa, #aaa) no-repeat center / 100% 1px;
}
.zoom input::-webkit-slider-thumb {
    appearance: none;
    width: 4px;
    height: 11px;
    background: #666;
}
.percent {
    margin-left: 12px;
}

/* Mini toolbar */
.mini, .menu {
    position: absolute;
    background: #fff;
    border: 1px solid #c6c6c6;
    box-shadow: 1px 2px 4px rgba(0, 0, 0, 0.2);
}
.mini {
    left: 76px;
    top: 566px;
    width: 270px;
    height: 57px;
    padding: 3px 2px;
}
.mini .row {
    height: 24px;
}
.mini .face {
    width: 69px;
}
.mini .combo {
    height: 24px;
}
.mini .combo.size {
    width: 51px;
}

/* Context menu */
.menu {
    left: 76px;
    top: 637px;
    width: 165px;
    padding: 1px 1px 2px;
    color: #555;
}
.menu button {
    position: relative;
    justify-content: flex-start;
    width: 100%;
    height: 25px;
    padding: 0 0 2px 31px;
}
.menu svg {
    position: absolute;
    left: 4px;
    width: 16px;
    height: 16px;
}
.menu-head {
    position: relative;
    display: flex;
    align-items: center;
    height: 24px;
    padding-left: 24px;
    font-weight: bold;
}
.menu-head span {
    flex: 1;
    height: 24px;
    line-height: 22px;
    padding-left: 9px;
    background: #ebebeb;
}
.menu .paste-option {
    height: 30px;
}
.menu .paste-option svg {
    left: 30px;
    width: 22px;
    height: 24px;
}
.menu .hover {
    background: #c6c6c6;
    color: #333;
}
.menu hr {
    height: 1px;
    margin: 0 0 1px 32px;
    border: 0;
    background: #e1e1e1;
}

/* Floating marks */
.pointer {
    position: absolute;
    left: 9px;
    top: 608px;
}
.shadowed {
    filter: drop-shadow(3px 1px 2px rgba(0, 0, 0, 0.5));
}
.stamp {
    position: absolute;
    right: 246px;
    top: 864px;
    display: flex;
    width: 564px;
    height: 135px;
    padding-left: 12px;
    background: rgba(255, 255, 255, 0.6);
}
.stamp-text {
    width: 318px;
    white-space: nowrap;
}
.stamp strong {
    display: block;
    font-size: 60px;
    line-height: 76px;
    color: #ff2d2d;
}
.stamp span {
    display: block;
    font: 46px/54px "Liberation Serif", serif;
    -webkit-text-stroke: 1px #2d80ff;
    color: #2d80ff;
}
.tag {
    width: 225px;
    height: 135px;
    border-radius: 32px;
    background: #2d80ff;
    color: #fff;
    font-size: 108px;
    font-weight: bold;
    line-height: 116px;
    text-align: center;
}
.site {
    position: absolute;
    right: 11px;
    bottom: 6px;
    display: flex;
    opacity: .8;
}
.site strong, .site span {
    display: block;
}
.site strong {
    font-size: 21px;
    line-height: 24px;
    color: #4690d0;
}
.site span {
    font: 17px/20px "Liberation Sans", sans-serif;
    color: #4fb564;
}
```
